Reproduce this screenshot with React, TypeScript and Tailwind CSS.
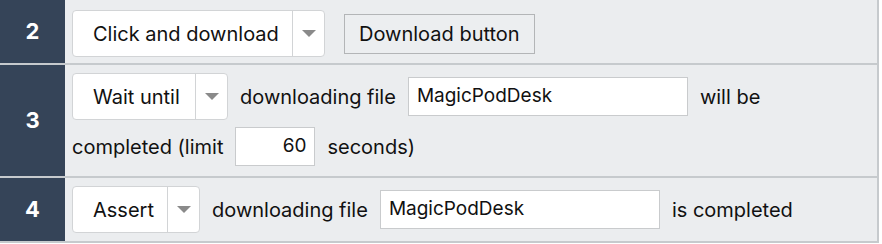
import React from "react";

const font = { fontFamily: 'Inter, "Liberation Sans", Arial, sans-serif' };

function Caret() {
  return (
    <svg width="14" height="7" viewBox="0 0 14 7" className="block">
      <polygon points="0,0 14,0 7,7" fill="#8a8a8a" />
    </svg>
  );
}

function Select({ label, width }: { label: string; width: string }) {
  return (
    <div
      className={`flex h-[47px] shrink-0 items-stretch rounded-[4px] border border-[#d2d4d6] bg-white ${width}`}
    >
      <div className="flex flex-1 items-center pl-[20px] text-[20px] text-[#111]">
        {label}
      </div>
      <div className="flex w-[32px] items-center justify-center border-l border-[#d2d4d6]">
        <Caret />
      </div>
    </div>
  );
}

function Field({
  value,
  width,
  right,
}: {
  value: string;
  width: string;
  right?: boolean;
}) {
  return (
    <div
      className={`flex h-[39px] shrink-0 items-center border border-[#c9cbcd] bg-white px-[8px] text-[19px] text-[#111] ${width} ${
        right ? "justify-end" : ""
      }`}
    >
      {value}
    </div>
  );
}

function Label({ children }: { children: React.ReactNode }) {
  return (
    <span className="shrink-0 whitespace-nowrap text-[20px] text-[#111]">
      {children}
    </span>
  );
}

function Step({
  num,
  children,
  className,
}: {
  num: number;
  children: React.ReactNode;
  className: string;
}) {
  return (
    <div className="flex border-b-2 border-[#c6cacd]">
      <div className="flex w-[65px] shrink-0 items-center justify-center bg-[#354458] text-[22px] font-bold text-white">
        {num}
      </div>
      <div className={`flex-1 bg-[#ebedef] pl-[7px] ${className}`}>
        {children}
      </div>
    </div>
  );
}

export default function App() {
  return (
    <div className="w-[882px] h-[244px] bg-white" style={font}>
      <div className="w-[879px] border-r-2 border-[#c6cacd]">
        <Step num={2} className="h-[63px] pt-[10px]">
          <div className="flex items-center gap-[19px]">
            <Select label="Click and download" width="w-[253px]" />
            <div className="flex h-[40px] items-center border border-[#b3b5b7] bg-[#eceef0] px-[14px] text-[20px] text-[#111]">
              Download button
            </div>
          </div>
        </Step>

        <Step num={3} className="h-[111px] pt-[8px]">
          <div className="flex flex-col gap-[3px]">
            <div className="flex h-[47px] items-center gap-[12px]">
              <Select label="Wait until" width="w-[156px]" />
              <Label>downloading file</Label>
              <Field value="MagicPodDesk" width="w-[280px]" />
              <Label>will be</Label>
            </div>
            <div className="flex h-[47px] items-center gap-[12px]">
              <Label>completed (limit</Label>
              <Field value="60" width="w-[80px]" right />
              <Label>seconds)</Label>
            </div>
          </div>
        </Step>

        <Step num={4} className="h-[63px] pt-[8px]">
          <div className="flex h-[47px] items-center gap-[12px]">
            <Select label="Assert" width="w-[128px]" />
            <Label>downloading file</Label>
            <Field value="MagicPodDesk" width="w-[280px]" />
            <Label>is completed</Label>
          </div>
        </Step>
      </div>
    </div>
  );
}
